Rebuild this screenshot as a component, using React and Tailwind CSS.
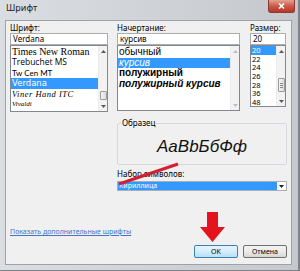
const Tri = ({ dir = "up", c = "#606060" }) => (
  <svg width="5" height="3" viewBox="0 0 5 3">
    {dir === "up" ? <path d="M0 3L2.5 0L5 3Z" fill={c} /> : <path d="M0 0L5 0L2.5 3Z" fill={c} />}
  </svg>
);

function Scroll({ thumbTop, thumbH, grip, disabled }) {
  const c = disabled ? "#bdbdbd" : "#5a5a5a";
  return (
    <div className="w-[9px] h-full bg-[#f2f2f2] border-l border-[#ececec] flex flex-col items-center">
      <div className="h-[10px] w-full flex items-center justify-center shrink-0">
        <Tri dir="up" c={c} />
      </div>
      <div className="flex-1 w-full flex flex-col items-center">
        {thumbH ? (
          <div
            className="w-[7px] rounded-[1px] border border-[#9c9c9c] bg-[linear-gradient(90deg,#f4f4f4,#dcdcdc)] flex flex-col items-center justify-center gap-[1px]"
            style={{ marginTop: thumbTop, height: thumbH }}
          >
            {grip && (
              <>
                <div className="w-[3px] h-px bg-[#8a8a8a]" />
                <div className="w-[3px] h-px bg-[#8a8a8a]" />
                <div className="w-[3px] h-px bg-[#8a8a8a]" />
              </>
            )}
          </div>
        ) : null}
      </div>
      <div className="h-[10px] w-full flex items-center justify-center shrink-0">
        <Tri dir="down" c={c} />
      </div>
    </div>
  );
}

export default function App() {
  return (
    <div className="relative w-[300px] h-[271px] overflow-hidden flex flex-col bg-[linear-gradient(90deg,#dadde1,#c5c8cc)] border-r-[2px] border-b border-[#7f8388] font-['Noto_Sans',sans-serif] text-black">
      {/* title bar */}
      <div className="h-[20px] flex items-start shrink-0">
        <span className="ml-[6px] mt-[3px] text-[9px] leading-[10px] text-[#222]">Шрифт</span>
        <div className="ml-auto mr-[3px] w-[27px] h-[13px] rounded-b-[3px] border border-t-0 border-[#8a3a33] bg-[linear-gradient(180deg,#e3a493,#cc5a47_50%,#b8342a)] flex items-center justify-center">
          <svg width="7" height="6" viewBox="0 0 7 6">
            <path d="M1 0.5L6 5.5M6 0.5L1 5.5" stroke="#fff" strokeWidth="1.6" />
          </svg>
        </div>
      </div>

      {/* client */}
      <div className="ml-[5px] w-[287px] h-[245px] border border-[#9da2a8] bg-[#f0f0f0] flex flex-col pl-[4px] pt-[2px]">
        {/* top row */}
        <div className="flex items-start">
          {/* font column */}
          <div className="w-[98px] flex flex-col">
            <div className="h-[9px] leading-[9px] text-[8px] mb-[1px]">Шрифт:</div>
            <div className="h-[12px] border border-[#abadb3] bg-white text-[8px] leading-[10px] px-[2px]">Verdana</div>
            <div className="h-[67px] border border-[#828790] bg-white flex">
              <div className="flex-1 flex flex-col pt-[1px] overflow-hidden whitespace-nowrap">
                <div className="h-[10.4px] leading-[10.4px] px-[1px] font-['Liberation_Serif',serif] text-[10px]">Times New Roman</div>
                <div className="h-[10.4px] leading-[10.4px] px-[1px] font-['Open_Sans',sans-serif] text-[8.5px]">Trebuchet MS</div>
                <div className="h-[10.4px] leading-[10.4px] px-[1px] font-['Lato',sans-serif] text-[8px]">Tw Cen MT</div>
                <div className="h-[10.4px] leading-[10.4px] px-[1px] bg-[#3399ff] text-white font-['DejaVu_Sans',sans-serif] text-[8.5px]">Verdana</div>
                <div className="h-[10.4px] leading-[10.4px] px-[1px] font-['Liberation_Serif',serif] italic text-[8.5px] tracking-[0.5px]">Viner Hand ITC</div>
                <div className="h-[10.4px] leading-[10.4px] px-[1px] font-['Liberation_Serif',serif] italic text-[7px]">Vivaldi</div>
              </div>
              <Scroll thumbTop={35} thumbH={9} />
            </div>
          </div>

          {/* style column */}
          <div className="ml-[9px] w-[123px] flex flex-col">
            <div className="h-[9px] leading-[9px] text-[8px] mb-[1px]">Начертание:</div>
            <div className="h-[12px] border border-[#abadb3] bg-white text-[8px] leading-[10px] px-[2px]">курсив</div>
            <div className="h-[66px] border border-[#828790] bg-white flex">
              <div className="flex-1 flex flex-col pt-[1px] overflow-hidden whitespace-nowrap font-['Liberation_Sans',sans-serif] text-[10px]">
                <div className="h-[10.5px] leading-[10.5px] px-[1px]">обычный</div>
                <div className="h-[10.5px] leading-[10.5px] px-[1px] bg-[#3399ff] text-white italic">курсив</div>
                <div className="h-[10.5px] leading-[10.5px] px-[1px] font-bold">полужирный</div>
                <div className="h-[10.5px] leading-[10.5px] px-[1px] font-bold italic">полужирный курсив</div>
              </div>
              <Scroll disabled />
            </div>
          </div>

          {/* size column */}
          <div className="ml-[10px] w-[36px] flex flex-col">
            <div className="h-[9px] leading-[9px] text-[8px] mb-[1px]">Размер:</div>
            <div className="h-[12px] border border-[#abadb3] bg-white text-[8px] leading-[10px] px-[2px]">20</div>
            <div className="h-[62px] border border-[#828790] bg-white flex">
              <div className="flex-1 flex flex-col overflow-hidden text-[7.5px]">
                <div className="h-[8.7px] leading-[8.7px] px-[1px] bg-[#3399ff] text-white">20</div>
                <div className="h-[8.7px] leading-[8.7px] px-[1px]">22</div>
                <div className="h-[8.7px] leading-[8.7px] px-[1px]">24</div>
                <div className="h-[8.7px] leading-[8.7px] px-[1px]">26</div>
                <div className="h-[8.7px] leading-[8.7px] px-[1px]">28</div>
                <div className="h-[8.7px] leading-[8.7px] px-[1px]">36</div>
                <div className="h-[8.7px] leading-[8.7px] px-[1px]">48</div>
              </div>
              <Scroll thumbTop={22} thumbH={14} grip />
            </div>
          </div>
        </div>

        {/* sample + charset */}
        <div className="ml-[107px] w-[170px] mt-[7px] flex flex-col">
          <fieldset className="border border-[#d5d9de] rounded-[2px] m-0 p-0">
            <legend className="ml-[3px] px-[1px] text-[8px] leading-[8px]">Образец</legend>
            <div className="h-[37px] flex items-center justify-center pt-[3px]">
              <span className="font-['Liberation_Sans',sans-serif] italic text-[17px] leading-[20px] text-[#111]">AaBbБбФф</span>
            </div>
          </fieldset>
          <div className="mt-[5px] text-[8px] leading-[8px]">Набор символов:</div>
          <div className="mt-[3px] h-[10px] border border-[#a9aeb5] bg-white flex">
            <div className="flex-1 bg-[#3399ff] text-white text-[7px] leading-[8px] px-[1px]">Кириллица</div>
            <div className="w-[9px] flex items-center justify-center">
              <Tri dir="down" c="#202020" />
            </div>
          </div>
        </div>

        {/* link */}
        <div className="mt-[37px] text-[7px] leading-[8px] text-[#4474c8] underline">Показать дополнительные шрифты</div>

        {/* buttons */}
        <div className="mt-[9px] flex justify-end gap-[5px] pr-[4px]">
          <div className="w-[44px] h-[13px] rounded-[2px] border border-[#3c7fb1] bg-[linear-gradient(180deg,#e5f4fc,#d4edfb_50%,#b7e0f8)] flex items-center justify-center text-[7px] leading-[8px]">OK</div>
          <div className="w-[44px] h-[13px] rounded-[2px] border border-[#707070] bg-[linear-gradient(180deg,#f2f2f2,#ebebeb_50%,#d6d6d6)] flex items-center justify-center text-[7px] leading-[8px]">Отмена</div>
        </div>
      </div>

      {/* annotations */}
      <svg className="absolute inset-0 pointer-events-none" width="300" height="271" viewBox="0 0 300 271">
        <line x1="119" y1="184" x2="178" y2="164" stroke="#d21f35" strokeWidth="3" />
        <polygon points="207,212 218,212 218,227 225,227 212.5,242 200,227 207,227" fill="#e3141c" />
      </svg>
    </div>
  );
}
